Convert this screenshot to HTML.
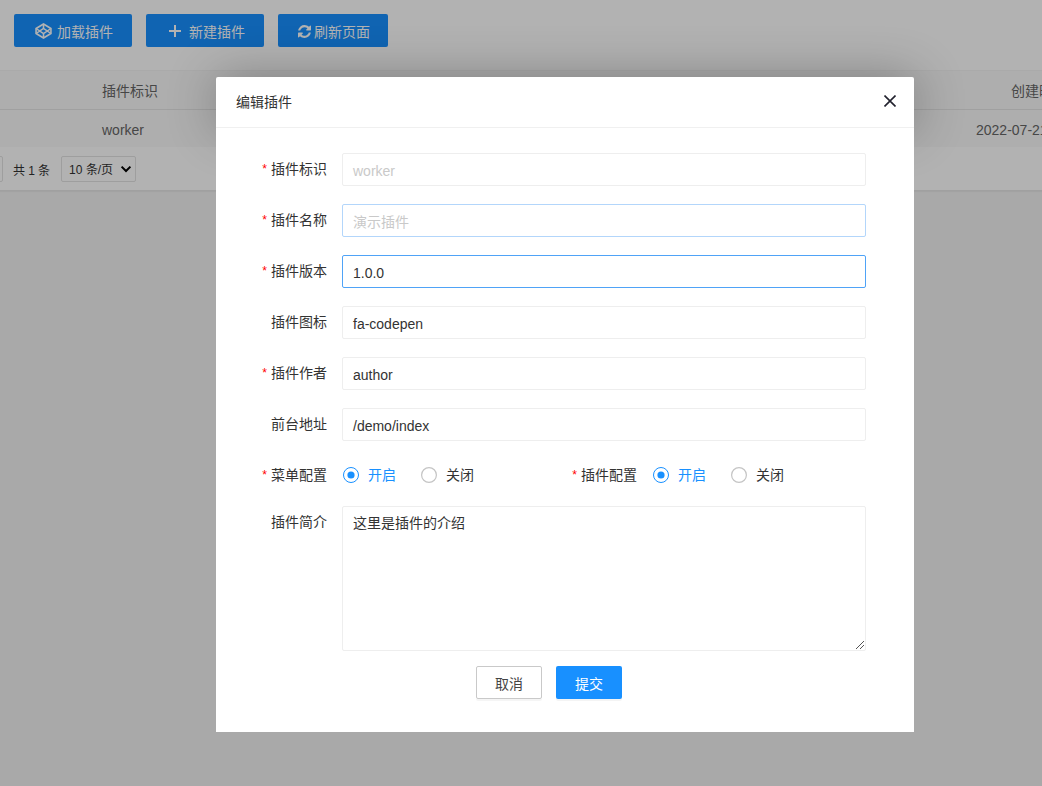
<!DOCTYPE html>
<html lang="zh-CN">
<head>
<meta charset="utf-8">
<style>
*{box-sizing:border-box;margin:0;padding:0}
html,body{width:1042px;height:786px;overflow:hidden}
body{font-family:"Liberation Sans",sans-serif;font-size:14px;color:#333;background:#f2f2f2;position:relative}
.top{position:absolute;left:0;top:0;width:1042px;height:191px;background:#fff}
.btn{position:absolute;top:14px;height:33px;background:#1890ff;color:#fff;border-radius:2px;line-height:33px;font-size:14px;white-space:nowrap}
.thead{position:absolute;left:0;top:70px;width:1042px;height:40px;background:#fafafa;border-top:1px solid #f4f4f4;border-bottom:1px solid #e6e6e6}
.trow{position:absolute;left:0;top:110px;width:1042px;height:37px;background:#fafafa}
.pager{position:absolute;left:0;top:147px;width:1042px;height:44px;background:#fff;border-bottom:1px solid #e6e6e6;box-shadow:0 1px 1px rgba(0,0,0,.04)}
.abs{position:absolute;white-space:nowrap}
.shade{position:absolute;left:0;top:0;width:1042px;height:786px;background:rgba(0,0,0,.3)}
.modal{position:absolute;left:216px;top:77px;width:698px;height:655px;background:#fff;border-radius:2px 2px 0 0}
.mtitle{position:absolute;left:0;top:0;width:698px;height:51px;border-bottom:1px solid #f0f0f0;padding-left:20px;line-height:50px;color:#333;font-size:14px}
.lbl{position:absolute;right:587px;text-align:right;white-space:nowrap;color:#333;margin-top:-2px}
.req{color:#f00;position:absolute;left:-10px;top:5px;font-size:12px;font-family:"Liberation Mono",monospace}
.inp{position:absolute;left:126px;width:524px;height:33px;border:1px solid #eee;border-radius:2px;padding-left:10px;line-height:34px;color:#333;white-space:nowrap}
.ph{color:#c9c9c9}
.rad{position:absolute;top:390px}
.rtxt{position:absolute;top:387px;white-space:nowrap;color:#333}
</style>
</head>
<body>
<div class="top"></div>
<div class="btn" style="left:14px;width:118px;padding-left:21px">
  <svg width="17" height="17" viewBox="0 0 16 16" preserveAspectRatio="none" style="position:absolute;left:21px;top:9px;height:16px"><g fill="none" stroke="#fff" stroke-width="1.5"><path d="M8 1L15 5.5V10.5L8 15L1 10.5V5.5Z"/><path d="M8 1V5.5M8 10.5V15M1 5.5L8 10.5L15 5.5M1 10.5L8 5.5L15 10.5"/></g></svg>
  <span class="abs" style="left:43px;top:2px">加载插件</span>
</div>
<div class="btn" style="left:146px;width:118px">
  <svg width="12" height="12" viewBox="0 0 12 12" style="position:absolute;left:23px;top:11px"><path d="M6 0V12M0 6H12" stroke="#fff" stroke-width="2" fill="none"/></svg>
  <span class="abs" style="left:43px;top:2px">新建插件</span>
</div>
<div class="btn" style="left:278px;width:110px">
  <svg width="13" height="13" viewBox="0 0 1536 1536" style="position:absolute;left:20px;top:11px"><path fill="#fff" d="M1511 928q0 5-1 7-64 268-268 434.5T764 1536q-146 0-282.5-55T238 1324l-129 129q-19 19-45 19t-45-19-19-45V960q0-26 19-45t45-19h448q26 0 45 19t19 45-19 45l-137 137q71 66 161 102t187 36q134 0 250-65t186-179q11-17 53-117 8-23 30-23h192q13 0 22.5 9.5t9.5 22.5zm25-800v448q0 26-19 45t-45 19h-448q-26 0-45-19t-19-45 19-45l138-138Q969 256 768 256q-134 0-250 65T332 500q-11 17-53 117-8 23-30 23H50q-13 0-22.5-9.5T18 608v-7q65-268 270-434.5T768 0q146 0 284 55.5T1297 212l130-129q19-19 45-19t45 19 19 45z"/></svg>
  <span class="abs" style="left:36px;top:2px">刷新页面</span>
</div>
<div class="thead"></div>
<span class="abs" style="left:102px;top:80px;color:#666">插件标识</span>
<span class="abs" style="left:1011px;top:80px;color:#666">创建时间</span>
<div class="trow"></div>
<span class="abs" style="left:102px;top:122px;color:#666">worker</span>
<span class="abs" style="left:976px;top:122px;color:#666">2022-07-21</span>
<div class="pager"></div>
<div class="abs" style="left:-10px;top:156px;width:13px;height:26px;border:1px solid #e2e2e2;border-radius:2px"></div>
<span class="abs" style="left:13px;top:161px;color:#333;font-size:12px">共 1 条</span>
<div class="abs" style="left:61px;top:156px;width:75px;height:26px;border:1px solid #e2e2e2;border-radius:2px;font-size:12px;line-height:26px;padding-left:7px;color:#333">10 条/页<svg width="12" height="8" viewBox="0 0 12 8" style="position:absolute;left:58px;top:8px"><path d="M1.6 1.6L6 6L10.4 1.6" stroke="#000" stroke-width="2" fill="none"/></svg></div>
<div class="shade"></div>
<div class="abs" style="left:0;top:0;width:1042px;height:190px;overflow:hidden"><div class="abs" style="left:216px;top:77px;width:698px;height:51px;border-radius:2px;box-shadow:1px 1px 50px rgba(0,0,0,.3)"></div></div>

<div class="modal">
  <div class="mtitle">编辑插件</div>
  <svg width="12" height="12" viewBox="0 0 12 12" style="position:absolute;left:668px;top:18px"><path d="M.5 .5L11.5 11.5M11.5 .5L.5 11.5" stroke="#22222e" stroke-width="1.6" fill="none"/></svg>

  <div class="lbl" style="top:83px"><span class="req">*</span>插件标识</div>
  <div class="inp" style="top:76px"><span class="ph">worker</span></div>

  <div class="lbl" style="top:134px"><span class="req">*</span>插件名称</div>
  <div class="inp" style="top:127px;border-color:#b3d6fb"><span class="ph">演示插件</span></div>

  <div class="lbl" style="top:185px"><span class="req">*</span>插件版本</div>
  <div class="inp" style="top:178px;border-color:#4fa3f7">1.0.0</div>

  <div class="lbl" style="top:236px">插件图标</div>
  <div class="inp" style="top:229px">fa-codepen</div>

  <div class="lbl" style="top:287px"><span class="req">*</span>插件作者</div>
  <div class="inp" style="top:280px">author</div>

  <div class="lbl" style="top:338px">前台地址</div>
  <div class="inp" style="top:331px">/demo/index</div>

  <div class="lbl" style="top:389px"><span class="req">*</span>菜单配置</div>
  <div class="lbl" style="top:389px;right:277px"><span class="req">*</span>插件配置</div>


  <svg class="rad" width="16" height="16" viewBox="0 0 16 16" style="left:127px"><circle cx="8" cy="8" r="7.5" fill="#fff" stroke="#1890ff" stroke-width="1"/><circle cx="8" cy="8" r="3.6" fill="#1890ff"/></svg><span class="rtxt" style="left:152px;color:#1890ff">开启</span>
  <svg class="rad" width="16" height="16" viewBox="0 0 16 16" style="left:205px"><circle cx="8" cy="8" r="7.4" fill="#fff" stroke="#c4c4c4" stroke-width="1.2"/></svg><span class="rtxt" style="left:230px">关闭</span>
  <svg class="rad" width="16" height="16" viewBox="0 0 16 16" style="left:437px"><circle cx="8" cy="8" r="7.5" fill="#fff" stroke="#1890ff" stroke-width="1"/><circle cx="8" cy="8" r="3.6" fill="#1890ff"/></svg><span class="rtxt" style="left:462px;color:#1890ff">开启</span>
  <svg class="rad" width="16" height="16" viewBox="0 0 16 16" style="left:515px"><circle cx="8" cy="8" r="7.4" fill="#fff" stroke="#c4c4c4" stroke-width="1.2"/></svg><span class="rtxt" style="left:540px">关闭</span>
  <div class="lbl" style="top:436px">插件简介</div>
  <div class="inp" style="top:429px;height:145px;line-height:1.5;padding-top:6px">这里是插件的介绍</div>

  <svg width="8" height="8" viewBox="0 0 8 8" style="position:absolute;left:640px;top:564px" fill="#555" shape-rendering="crispEdges"><rect x="0" y="7" width="1" height="1"/><rect x="1" y="6" width="1" height="1"/><rect x="2" y="5" width="1" height="1"/><rect x="3" y="4" width="1" height="1"/><rect x="4" y="3" width="1" height="1"/><rect x="5" y="2" width="1" height="1"/><rect x="6" y="1" width="1" height="1"/><rect x="7" y="0" width="1" height="1"/><rect x="4" y="7" width="1" height="1"/><rect x="5" y="6" width="1" height="1"/><rect x="6" y="5" width="1" height="1"/><rect x="7" y="4" width="1" height="1"/></svg>
  <div class="abs" style="left:260px;top:589px;width:66px;height:33px;border:1px solid #c9c9c9;border-radius:2px;text-align:center;line-height:34px;color:#444;box-shadow:0 2px 0 rgba(0,0,0,.04)">取消</div>
  <div class="abs" style="left:340px;top:589px;width:66px;height:33px;background:#1890ff;border-radius:2px;text-align:center;line-height:36px;color:#fff;box-shadow:0 2px 0 rgba(0,0,0,.045)">提交</div>
</div>
</body>
</html>
